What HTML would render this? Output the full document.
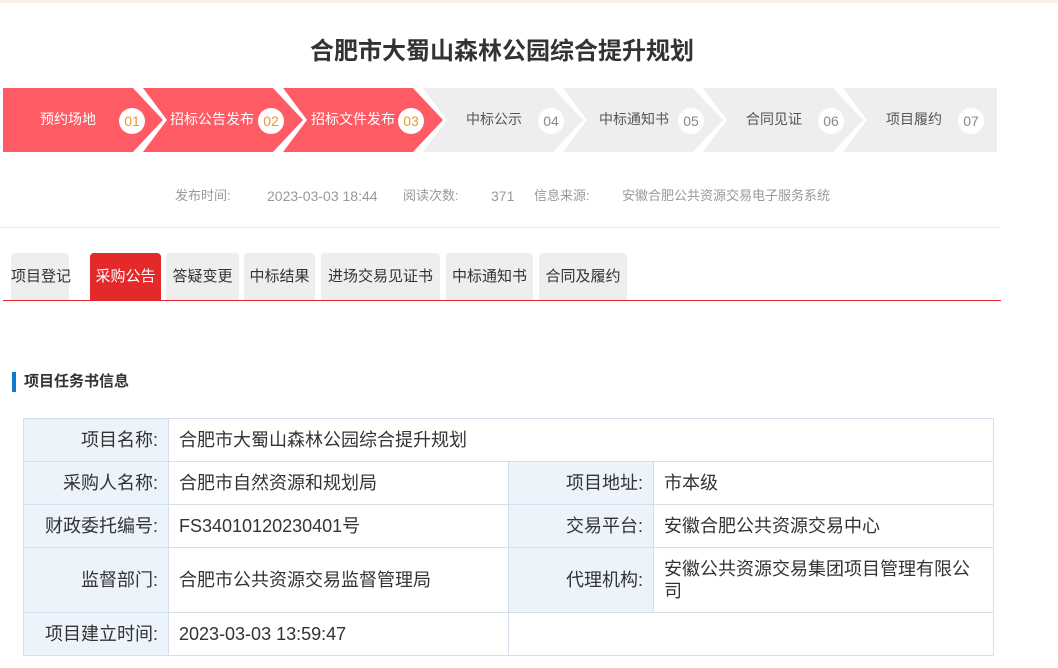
<!DOCTYPE html>
<html><head><meta charset="utf-8"><style>
*{margin:0;padding:0;box-sizing:border-box}
body{width:1058px;height:668px;overflow:hidden;background:#fff;font-family:"Liberation Sans","Noto Sans CJK SC",sans-serif;position:relative;color:#333}
.a{position:absolute}
.m{position:absolute;top:186px;font-size:13px;line-height:20px;color:#999;white-space:nowrap}
.tab{position:absolute;top:253px;height:47px;background:#eeeeee;border-radius:4px 4px 0 0;font-size:15px;line-height:48px;text-align:center;color:#333;white-space:nowrap}
.tab.on{background:#e3292a;color:#fff}
.c{position:absolute;font-size:18px;line-height:43px;border-right:1px solid #d3dfea;border-bottom:1px solid #d3dfea;padding:0 10px;color:#333}
.l{background:#ecf3fb;text-align:right}
</style></head><body>
<div class="a" style="left:0;top:0;width:1058px;height:3px;background:#f8f0e6"></div>
<div class="a" style="left:0;top:36px;width:1004px;text-align:center;font-size:24px;line-height:32px;font-weight:bold;color:#333">合肥市大蜀山森林公园综合提升规划</div>
<svg class="a" style="left:0;top:88px" width="1000" height="64">
<g font-family="Liberation Sans, Noto Sans CJK SC, sans-serif" font-size="14" text-anchor="middle">
<polygon points="3,0 133,0 163,32 133,64 3,64" fill="#ff5b65"/>
<polygon points="143,0 273,0 303,32 273,64 143,64 167,32" fill="#ff5b65"/>
<polygon points="283,0 413,0 443,32 413,64 283,64 307,32" fill="#ff5b65"/>
<polygon points="423,0 553,0 583,32 553,64 423,64 447,32" fill="#eeeeee"/>
<polygon points="563,0 693,0 723,32 693,64 563,64 587,32" fill="#eeeeee"/>
<polygon points="703,0 833,0 863,32 833,64 703,64 727,32" fill="#eeeeee"/>
<polygon points="843,0 997,0 997,64 843,64 867,32" fill="#eeeeee"/>
<text x="68" y="36" fill="#fff">预约场地</text>
<text x="212" y="36" fill="#fff">招标公告发布</text>
<text x="353" y="36" fill="#fff">招标文件发布</text>
<text x="494" y="36" fill="#555">中标公示</text>
<text x="634" y="36" fill="#555">中标通知书</text>
<text x="774" y="36" fill="#555">合同见证</text>
<text x="914" y="36" fill="#555">项目履约</text>
<circle cx="132" cy="33" r="13" fill="#fff"/><text x="132" y="38" fill="#f0962a" font-size="14">01</text>
<circle cx="271" cy="33" r="13" fill="#fff"/><text x="271" y="38" fill="#f0962a" font-size="14">02</text>
<circle cx="411" cy="33" r="13" fill="#fff"/><text x="411" y="38" fill="#f0962a" font-size="14">03</text>
<circle cx="551" cy="33" r="13" fill="#fff"/><text x="551" y="38" fill="#888" font-size="14">04</text>
<circle cx="691" cy="33" r="13" fill="#fff"/><text x="691" y="38" fill="#888" font-size="14">05</text>
<circle cx="831" cy="33" r="13" fill="#fff"/><text x="831" y="38" fill="#888" font-size="14">06</text>
<circle cx="971" cy="33" r="13" fill="#fff"/><text x="971" y="38" fill="#888" font-size="14">07</text>
</g></svg>
<div class="m" style="left:175px">发布时间:</div>
<div class="m" style="left:267px;font-size:14px">2023-03-03 18:44</div>
<div class="m" style="left:403px">阅读次数:</div>
<div class="m" style="left:491px;font-size:14px">371</div>
<div class="m" style="left:534px">信息来源:</div>
<div class="m" style="left:622px">安徽合肥公共资源交易电子服务系统</div>
<div class="a" style="left:0;top:227px;width:1000px;height:1px;background:#e8e8e8"></div>
<div class="tab" style="left:11px;width:58px">项目登记</div>
<div class="tab on" style="left:90px;width:71px">采购公告</div>
<div class="tab" style="left:166px;width:73px">答疑变更</div>
<div class="tab" style="left:244px;width:71px">中标结果</div>
<div class="tab" style="left:321px;width:119px">进场交易见证书</div>
<div class="tab" style="left:446px;width:87px">中标通知书</div>
<div class="tab" style="left:539px;width:88px">合同及履约</div>
<div class="a" style="left:3px;top:300px;width:998px;height:1px;background:#e3292a"></div>
<div class="a" style="left:12px;top:372px;width:4px;height:20px;background:#0a7bd0"></div>
<div class="a" style="left:24px;top:372px;font-size:15px;font-weight:bold;line-height:20px;color:#333">项目任务书信息</div>
<div class="a" style="left:23px;top:418px;width:971px;height:238px;border-left:1px solid #d3dfea;border-top:1px solid #d3dfea"></div>
<div class="c l" style="left:24px;top:419px;width:145px;height:43px">项目名称:</div>
<div class="c" style="left:169px;top:419px;width:825px;height:43px">合肥市大蜀山森林公园综合提升规划</div>
<div class="c l" style="left:24px;top:462px;width:145px;height:43px">采购人名称:</div>
<div class="c" style="left:169px;top:462px;width:340px;height:43px">合肥市自然资源和规划局</div>
<div class="c l" style="left:509px;top:462px;width:145px;height:43px">项目地址:</div>
<div class="c" style="left:654px;top:462px;width:340px;height:43px">市本级</div>
<div class="c l" style="left:24px;top:505px;width:145px;height:43px">财政委托编号:</div>
<div class="c" style="left:169px;top:505px;width:340px;height:43px">FS34010120230401号</div>
<div class="c l" style="left:509px;top:505px;width:145px;height:43px">交易平台:</div>
<div class="c" style="left:654px;top:505px;width:340px;height:43px">安徽合肥公共资源交易中心</div>
<div class="c l" style="left:24px;top:548px;width:145px;height:65px;line-height:65px">监督部门:</div>
<div class="c" style="left:169px;top:548px;width:340px;height:65px;line-height:65px">合肥市公共资源交易监督管理局</div>
<div class="c l" style="left:509px;top:548px;width:145px;height:65px;line-height:65px">代理机构:</div>
<div class="c" style="left:654px;top:548px;width:340px;height:65px;line-height:22px;padding-top:10px">安徽公共资源交易集团项目管理有限公司</div>
<div class="c l" style="left:24px;top:613px;width:145px;height:43px">项目建立时间:</div>
<div class="c" style="left:169px;top:613px;width:340px;height:43px">2023-03-03 13:59:47</div>
<div class="c" style="left:509px;top:613px;width:485px;height:43px"></div>
</body></html>
